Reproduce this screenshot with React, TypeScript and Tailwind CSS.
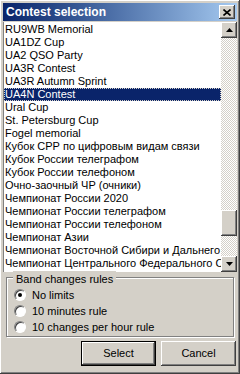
const contests = [
  "RU9WB Memorial",
  "UA1DZ Cup",
  "UA2 QSO Party",
  "UA3R Contest",
  "UA3R Autumn Sprint",
  "UA4N Contest",
  "Ural Cup",
  "St. Petersburg Cup",
  "Fogel memorial",
  "Кубок СРР по цифровым видам связи",
  "Кубок России телеграфом",
  "Кубок России телефоном",
  "Очно-заочный ЧР (очники)",
  "Чемпионат России 2020",
  "Чемпионат России телеграфом",
  "Чемпионат России телефоном",
  "Чемпионат Азии",
  "Чемпионат Восточной Сибири и Дальнего Востока",
  "Чемпионат Центрального Федерального Округа",
];

const rules = ["No limits", "10 minutes rule", "10 changes per hour rule"];

const raised =
  "shadow-[inset_-1px_-1px_#404040,inset_1px_1px_#ffffff,inset_-2px_-2px_#808080,inset_2px_2px_#d4d0c8]";

function ArrowButton({ up }: { up?: boolean }) {
  return (
    <div className={`w-4 h-4 bg-[#d4d0c8] flex items-center justify-center ${raised}`}>
      <svg width="7" height="4" viewBox="0 0 7 4">
        <path d={up ? "M3.5 0 L7 4 L0 4 Z" : "M0 0 L7 0 L3.5 4 Z"} fill="#000" />
      </svg>
    </div>
  );
}

function Radio({ checked, label }: { checked?: boolean; label: string }) {
  return (
    <div className="flex items-center h-4 gap-[6px]">
      <div className="w-3 h-3 rounded-full bg-white border border-t-[#808080] border-l-[#808080] border-b-[#ffffff] border-r-[#ffffff] shadow-[inset_1px_1px_#404040] flex items-center justify-center">
        {checked && <div className="w-1 h-1 rounded-full bg-black" />}
      </div>
      <span>{label}</span>
    </div>
  );
}

export default function App() {
  return (
    <div
      className={`w-[240px] h-[374px] bg-[#d4d0c8] p-[3px] flex flex-col text-[11px] text-black ${raised}`}
      style={{ fontFamily: '"Liberation Sans", Arial, sans-serif' }}
    >
      <div className="h-[18px] flex items-center justify-between pl-[3px] pr-[2px] bg-gradient-to-r from-[#0a246a] to-[#a6caf0]">
        <span className="text-white font-bold text-[12px]">Contest selection</span>
        <div className={`w-4 h-[14px] bg-[#d4d0c8] flex items-center justify-center ${raised}`}>
          <svg width="8" height="7" viewBox="0 0 8 7">
            <path d="M0.5 0.5 L7.5 6.5 M7.5 0.5 L0.5 6.5" stroke="#000" strokeWidth="1.6" />
          </svg>
        </div>
      </div>

      <div className="flex h-[250px] bg-white mt-[1px] border-l border-[#808080]">
        <div className="flex-1 overflow-hidden pt-[1px]">
          {contests.map((c, i) => (
            <div
              key={c}
              className={`h-[13px] leading-[13px] pl-[1px] whitespace-nowrap ${
                i === 5 ? "bg-[#0a246a] text-white outline-1 outline-dotted outline-[#d4d0c8] -outline-offset-1" : ""
              }`}
            >
              {c}
            </div>
          ))}
        </div>
        <div className="w-4 flex flex-col bg-[repeating-conic-gradient(#d4d0c8_0_25%,#ffffff_0_50%)] bg-[length:2px_2px]">
          <ArrowButton up />
          <div className="flex-1 flex flex-col justify-end pb-[20px]">
            <div className={`h-[26px] bg-[#d4d0c8] ${raised}`} />
          </div>
          <ArrowButton />
        </div>
      </div>

      <div className="mt-[5px] mx-[3px] h-[60px] border border-[#808080] shadow-[1px_1px_#ffffff,inset_1px_1px_#ffffff] relative pt-[9px] pl-[7px] flex flex-col">
        <span className="absolute -top-[7px] left-[6px] bg-[#d4d0c8] px-[3px]">Band changes rules</span>
        {rules.map((r, i) => (
          <Radio key={r} label={r} checked={i === 0} />
        ))}
      </div>

      <div className="flex justify-end gap-[5px] mt-[4px] pr-[1px]">
        <button className="w-[75px] h-[25px] bg-[#d4d0c8] border border-black shadow-[inset_-1px_-1px_#404040,inset_1px_1px_#ffffff,inset_-2px_-2px_#808080]">
          Select
        </button>
        <button className={`w-[75px] h-[25px] bg-[#d4d0c8] ${raised}`}>Cancel</button>
      </div>
    </div>
  );
}
